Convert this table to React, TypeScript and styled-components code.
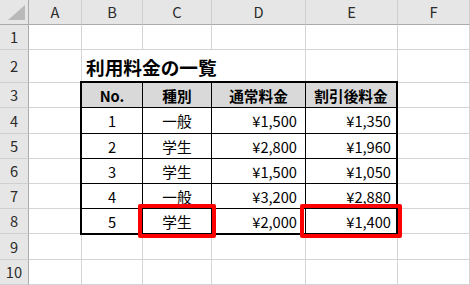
import React from 'react';
import styled, {createGlobalStyle} from 'styled-components';

const GlobalStyle = createGlobalStyle`
  html, body {
    margin: 0;
    padding: 0;
    background: #fff;
  }
  * {
    box-sizing: border-box;
  }
`

const columns = ['A', 'B', 'C', 'D', 'E', 'F'];
const rowNumbers = [1, 2, 3, 4, 5, 6, 7, 8, 9, 10];

type Row = {no: string; kind: string; normal: string; discount: string; mark?: boolean};

const rows: Row[] = [
    {no: '1', kind: '一般', normal: '¥1,500', discount: '¥1,350'},
    {no: '2', kind: '学生', normal: '¥2,800', discount: '¥1,960'},
    {no: '3', kind: '学生', normal: '¥1,500', discount: '¥1,050'},
    {no: '4', kind: '一般', normal: '¥3,200', discount: '¥2,880'},
    {no: '5', kind: '学生', normal: '¥2,000', discount: '¥1,400', mark: true},
];

const App = () => {
    return (
        <>
            <GlobalStyle/>
            <Sheet>
                <Corner>
                    <svg width="28" height="24" viewBox="0 0 28 24">
                        <polygon points="8,20 25,20 25,5" fill="#b9b9b9"/>
                    </svg>
                </Corner>
                {columns.map(c => <ColHeader key={c}>{c}</ColHeader>)}

                {rowNumbers.map(n => {
                    if (n === 2) {
                        return (
                            <React.Fragment key={n}>
                                <RowHeader>{n}</RowHeader>
                                <Cell/>
                                <TitleCell>利用料金の一覧</TitleCell>
                                <Cell/>
                                <Cell/>
                            </React.Fragment>
                        )
                    }
                    if (n >= 3 && n <= 8) {
                        // B..E are covered by the table
                        return (
                            <React.Fragment key={n}>
                                <RowHeader>{n}</RowHeader>
                                <Cell/>
                                <Cell/>
                            </React.Fragment>
                        )
                    }
                    return (
                        <React.Fragment key={n}>
                            <RowHeader>{n}</RowHeader>
                            {columns.map(c => <Cell key={c}/>)}
                        </React.Fragment>
                    )
                })}

                <Table>
                    <HeadCell>No.</HeadCell>
                    <HeadCell>種別</HeadCell>
                    <HeadCell>通常料金</HeadCell>
                    <HeadCell $last>割引後料金</HeadCell>
                    {rows.map((r, i) => {
                        const lastRow = i === rows.length - 1;
                        return (
                            <React.Fragment key={r.no}>
                                <BodyCell $bottom={lastRow}>{r.no}</BodyCell>
                                <BodyCell $bottom={lastRow}>
                                    {r.kind}
                                    {r.mark && <Mark $side={5}/>}
                                </BodyCell>
                                <BodyCell $bottom={lastRow} $align="right" $pad={8}>{r.normal}</BodyCell>
                                <BodyCell $bottom={lastRow} $last $align="right" $pad={5}>
                                    {r.discount}
                                    {r.mark && <Mark $side={6}/>}
                                </BodyCell>
                            </React.Fragment>
                        )
                    })}
                </Table>
            </Sheet>
        </>
    )
}

export default App;

const UiFont = `"Noto Sans CJK JP", "Noto Sans", sans-serif`;

const Sheet = styled.div`
  width: 470px;
  height: 285px;
  overflow: hidden;
  display: grid;
  grid-template-columns: 29px 53px 61px 69px 94px 92px 1fr;
  grid-template-rows: 25px 25px 33px 25px 26px 25px 25px 25px 25px 26px 25px;
  font-family: ${UiFont};
  background: #fff;
`

const Corner = styled.div`
  background: #e6e6e6;
  border-right: 1px solid #ababab;
  border-bottom: 1px solid #ababab;
  display: flex;
`

const ColHeader = styled.div`
  background: #e6e6e6;
  border-right: 1px solid #cfcfcf;
  border-bottom: 1px solid #ababab;
  display: flex;
  align-items: center;
  justify-content: center;
  font-size: 14.67px;
  color: #2b2b2b;
  padding-bottom: 1px;
`

const RowHeader = styled.div`
  background: #e6e6e6;
  border-right: 1px solid #ababab;
  border-bottom: 1px solid #cfcfcf;
  display: flex;
  align-items: center;
  justify-content: center;
  font-size: 14.67px;
  color: #2b2b2b;
  padding-bottom: 1px;
`

const Cell = styled.div`
  border-right: 1px solid #d4d4d4;
  border-bottom: 1px solid #d4d4d4;
`

const TitleCell = styled(Cell)`
  grid-column: span 3;
  display: flex;
  align-items: center;
  padding: 1px 0 0 4px;
  font-size: 18.67px;
  font-weight: 700;
  color: #000;
  white-space: nowrap;
`

const Table = styled.div`
  grid-column: 3 / 7;
  grid-row: 4 / 10;
  margin: -2px 0 -1px -2px;
  border: 2px solid #000;
  background: #fff;
  display: grid;
  grid-template-columns: 61px 69px 94px 90px;
  grid-template-rows: 25px 26px 25px 25px 25px 24px;
  font-size: 14.67px;
  color: #000;
`

const HeadCell = styled.div<{ $last?: boolean }>`
  background: #d9d9d9;
  border-right: ${p => p.$last ? 'none' : '1px solid #000'};
  border-bottom: 1px solid #000;
  display: flex;
  align-items: center;
  justify-content: center;
  font-weight: 700;
`

const BodyCell = styled.div<{ $last?: boolean; $bottom?: boolean; $align?: 'center' | 'right'; $pad?: number }>`
  position: relative;
  border-right: ${p => p.$last ? 'none' : '1px solid #000'};
  border-bottom: ${p => p.$bottom ? 'none' : '1px solid #000'};
  display: flex;
  align-items: center;
  justify-content: ${p => p.$align === 'right' ? 'flex-end' : 'center'};
  padding-right: ${p => p.$pad ?? 0}px;
`

const Mark = styled.span<{ $side: number }>`
  position: absolute;
  top: -5px;
  bottom: -5px;
  left: -${p => p.$side}px;
  right: -${p => p.$side}px;
  border: 4px solid #ff0000;
  border-radius: 2px;
`
